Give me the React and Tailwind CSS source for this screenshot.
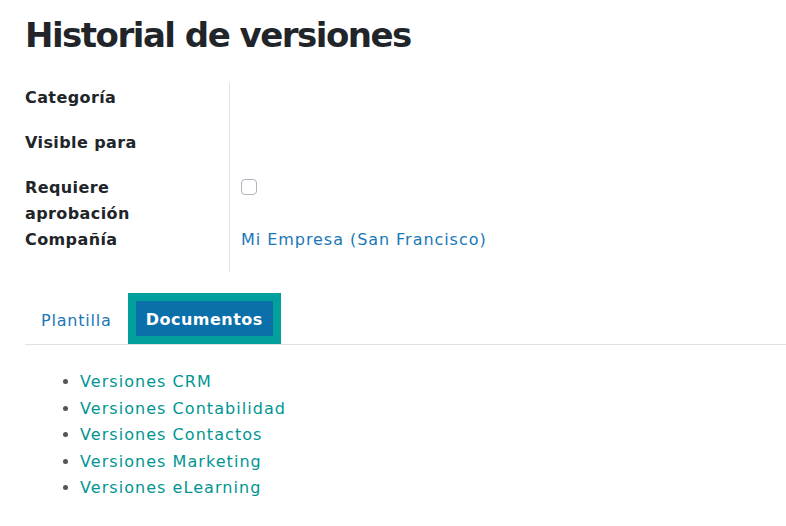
import React from "react";

const rows = [
  { label: "Categoría" },
  { label: "Visible para" },
  { label: "Requiere aprobación", checkbox: true },
  { label: "Compañía", link: "Mi Empresa (San Francisco)" },
];

const docs = [
  "Versiones CRM",
  "Versiones Contabilidad",
  "Versiones Contactos",
  "Versiones Marketing",
  "Versiones eLearning",
];

export default function App() {
  return (
    <div className="min-h-screen bg-white pl-[25px] pt-[12px] font-['DejaVu_Sans',sans-serif] text-[#212529]">
      {/* Title */}
      <h1 className="text-[34px] font-semibold leading-[46px] tracking-[-1.5px]">
        Historial de versiones
      </h1>

      {/* Fields */}
      <div className="mt-[25px] flex">
        <div className="w-[204px] pt-[2px]">
          {rows.map((r) => (
            <div
              key={r.label}
              className="min-h-[45px] w-[120px] text-[16px] font-bold leading-[26px] tracking-[0.4px]"
            >
              {r.label}
            </div>
          ))}
        </div>
        <div className="border-l border-[#dee2e6] pl-[11px] pt-[2px]">
          <div className="h-[45px]"></div>
          <div className="h-[45px]"></div>
          <div className="flex h-[52px] items-start pt-[4px]">
            <span className="block h-4 w-4 rounded-[4px] border border-[#adb5bd] bg-white"></span>
          </div>
          <div className="h-[45px] text-[16px] leading-[26px] tracking-[0.95px] text-[#1a77b8]">
            Mi Empresa (San Francisco)
          </div>
        </div>
      </div>

      {/* Tabs */}
      <div className="mt-[21px] flex items-end border-b border-[#dee2e6]">
        <div className="px-[16px] pb-[10px] text-[16px] leading-[26px] tracking-[0.8px] text-[#1a77b8]">
          Plantilla
        </div>
        <div className="border-[8px] border-[#01a09c] bg-[#0b70a9] px-[10px] pb-[3px] pt-[6px] text-[16px] font-bold leading-[26px] tracking-[0.5px] text-white">
          Documentos
        </div>
      </div>

      {/* Documents list */}
      <ul className="mt-[24px] list-disc pl-[55px] text-[16px] leading-[26.5px] tracking-[1.05px] text-[#019592] marker:text-[#555]">
        {docs.map((d) => (
          <li key={d}>{d}</li>
        ))}
      </ul>
    </div>
  );
}
